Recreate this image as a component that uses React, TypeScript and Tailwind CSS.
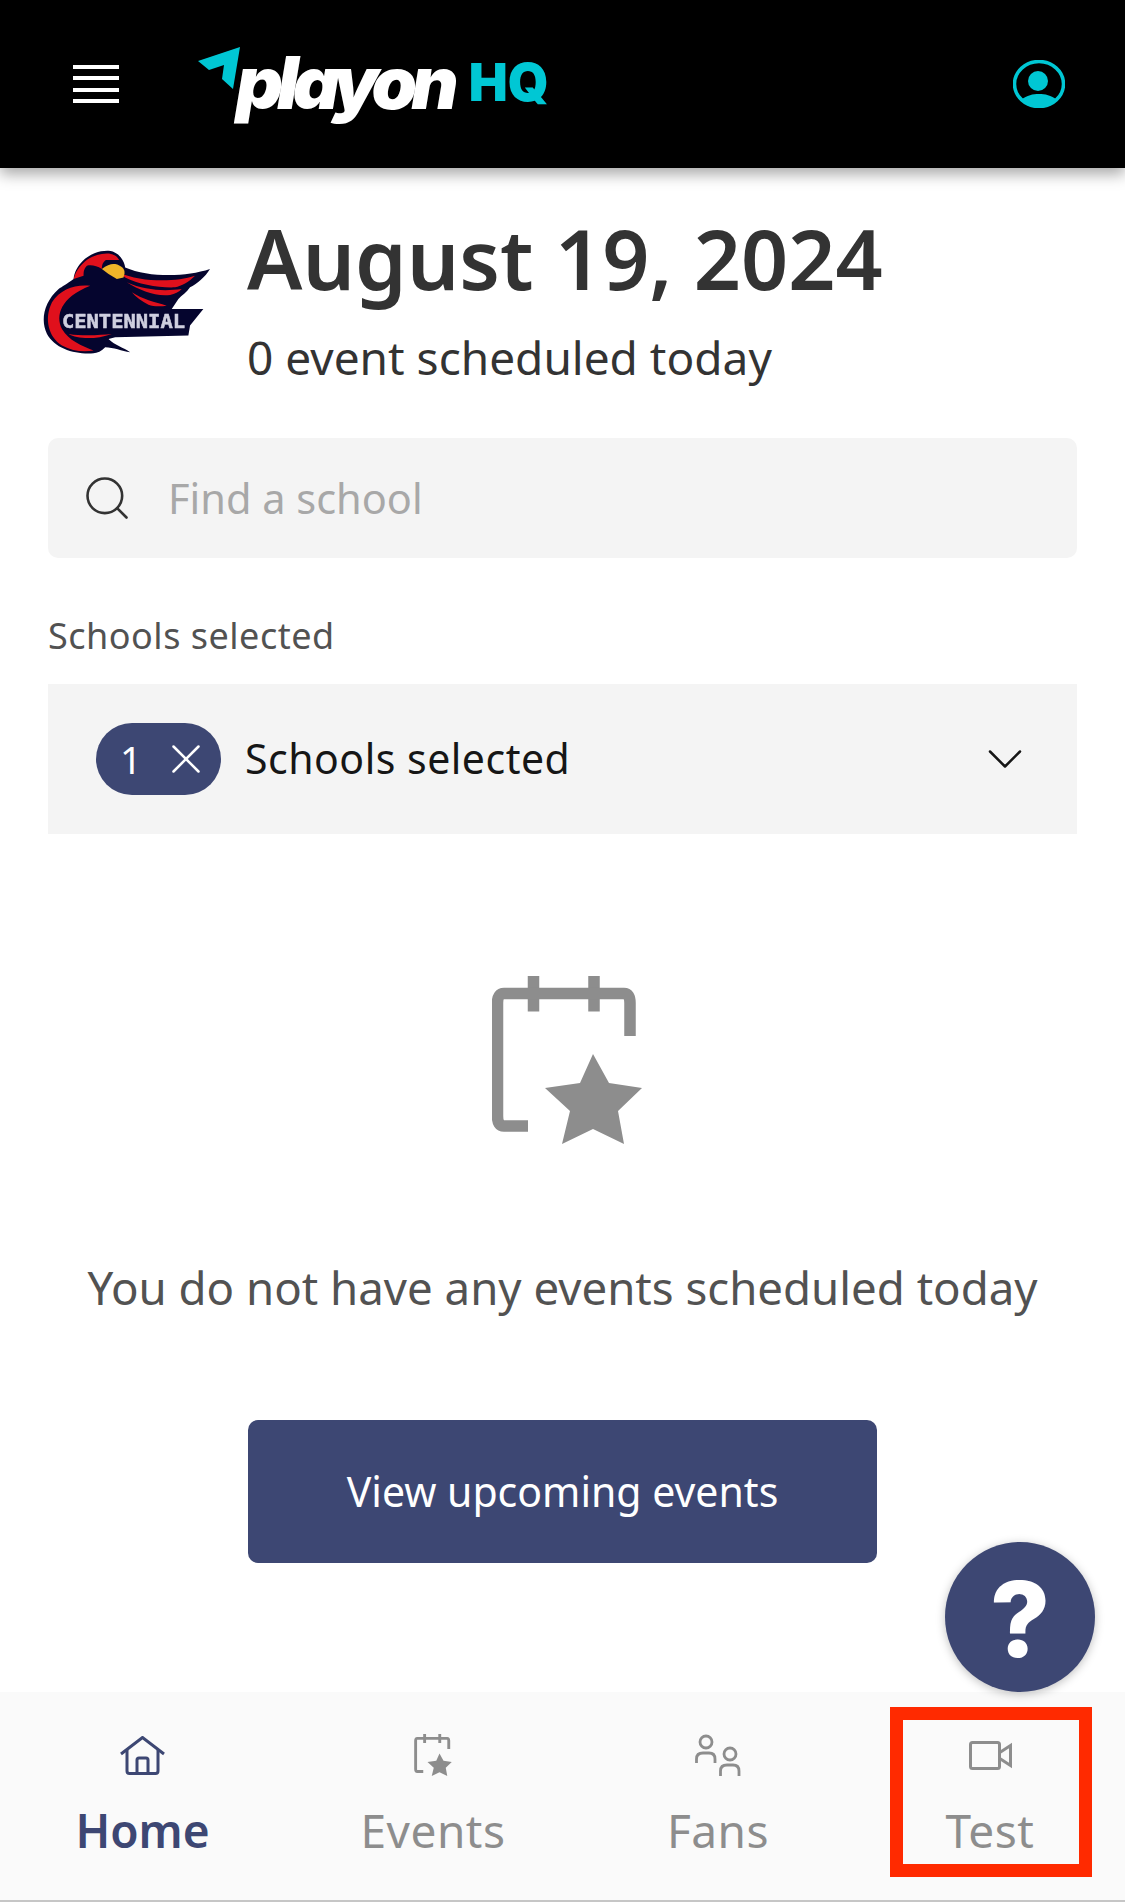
import { ChevronDown, Search, X } from "lucide-react";

function CalendarStar({ className }: { className?: string }) {
  return (
    <svg viewBox="0 0 150 168" className={className} fill="none">
      <path d="M41.5 0V35.5M102 0V35.5" stroke="currentColor" strokeWidth="11.5" />
      <path d="M36 150H12Q5.5 150 5.5 140V27Q5.5 17.5 12 17.5H132Q138 17.5 138 27V60" stroke="currentColor" strokeWidth="11.5" />
      <polygon fill="currentColor" points="101,78 117,107 150,112 126,135 132,168 101,153 70,168 78,135 53,112 88,107" />
    </svg>
  );
}

function Logo() {
  return (
    <div className="ml-[79px] flex items-center">
      <svg viewBox="0 0 42 42" className="mb-[32px] h-[42px] w-[42px] shrink-0">
        <polygon points="0,14 42,0 35,42 24,32 26,18 11,23" fill="#00c7d4" />
      </svg>
      <span className="mb-[4px] ml-[-4px] font-['Inter',sans-serif] text-[73px] leading-none font-black tracking-[-6px] text-white italic">
        playon
      </span>
      <span className="mb-[2px] ml-[16px] font-['Inter',sans-serif] text-[52px] leading-none font-black text-[#00c7d4]">
        HQ
      </span>
    </div>
  );
}

function CentennialLogo() {
  return (
    <svg viewBox="70 55 505 315" className="h-[105px] w-[168px] shrink-0 blur-[0.7px]">
      <path
        d="M165 145C170 100 215 58 270 60C300 62 318 90 320 110C390 140 500 140 575 115C560 140 535 160 515 170C505 185 490 195 480 205L460 235H555L515 285L510 315L290 320L270 325C290 345 315 350 335 365C310 362 285 350 260 350C250 362 235 368 225 368C170 372 110 355 85 310C65 270 75 215 120 175C130 168 145 160 165 145Z"
        fill="#05052e"
      />
      <path
        d="M165 145C175 105 215 68 265 68C285 68 298 78 302 88L262 88C252 95 250 105 250 115C235 105 218 102 205 105C195 115 195 125 195 135Z"
        fill="#e0101c"
      />
      <path
        d="M300 125C370 155 470 155 530 135C510 155 490 165 470 170C420 172 360 160 320 140ZM325 155C380 180 440 182 490 175C480 185 470 190 455 193C410 198 365 180 325 155ZM340 185C370 205 410 215 445 225C425 228 405 228 390 222C370 212 352 200 340 185Z"
        fill="#e0101c"
      />
      <path
        d="M215 165C170 160 125 175 100 215C75 265 90 320 130 345C160 362 195 365 225 360C190 345 150 330 130 295C110 255 125 200 215 165Z"
        fill="#e0101c"
      />
      <path d="M150 310C175 325 230 328 280 310C250 312 200 318 150 310Z" fill="#e0101c" />
      <path d="M250 115C265 102 280 98 290 100C308 104 320 115 318 128L315 140L295 145L270 130Z" fill="#f0b429" />
      <text
        x="130"
        y="292"
        textLength="370"
        lengthAdjust="spacingAndGlyphs"
        fontFamily="'DejaVu Sans Mono', monospace"
        fontWeight="700"
        fontSize="56"
        fill="#cfcfdf"
        stroke="#cfcfdf"
        strokeWidth="1.5"
      >
        CENTENNIAL
      </text>
    </svg>
  );
}

function HomeIcon() {
  return (
    <svg viewBox="0 0 45 39" className="h-[39px] w-[45px]" fill="none" stroke="currentColor" strokeWidth="3">
      <path d="M1 18L22.5 1.5L44 18" />
      <path d="M7 14V35Q7 37.5 9.5 37.5H35.5Q38 37.5 38 35V14" />
      <path d="M17 37V24Q17 22 19 22H26Q28 22 28 24V37" />
    </svg>
  );
}

function FansIcon() {
  return (
    <svg viewBox="0 0 46 42" className="h-[42px] w-[46px]" fill="none" stroke="currentColor" strokeWidth="2.8">
      <circle cx="11" cy="8" r="6" />
      <path d="M1.5 29V25Q1.5 19 8 19H14Q20 19 20 25V29" />
      <circle cx="35" cy="20" r="6" />
      <path d="M25.5 42V37Q25.5 31 32 31H38Q44 31 44 37V42" />
    </svg>
  );
}

function VideoIcon() {
  return (
    <svg viewBox="0 0 43 29" className="h-[29px] w-[43px]" fill="none" stroke="currentColor" strokeWidth="3">
      <rect x="1.5" y="1.5" width="29" height="26" rx="2" />
      <path d="M30 12L41.5 4.5V24.5L30 17" />
    </svg>
  );
}

const navItems = [
  { label: "Home", icon: <HomeIcon />, active: true },
  { label: "Events", icon: <CalendarStar className="h-[42px] w-[38px]" /> },
  { label: "Fans", icon: <FansIcon /> },
  { label: "Test", icon: <VideoIcon /> },
];

export default function App() {
  return (
    <div className="relative flex h-[1902px] w-[1125px] flex-col overflow-hidden bg-white font-['Noto_Sans',sans-serif]">
      <header className="flex h-[168px] shrink-0 items-center bg-black shadow-[0_6px_14px_rgba(0,0,0,0.35)]">
        <div className="ml-[73px] flex h-[39px] w-[46px] shrink-0 flex-col justify-between">
          <div className="h-[4px] bg-white" />
          <div className="h-[4px] bg-white" />
          <div className="h-[4px] bg-white" />
          <div className="h-[4px] bg-white" />
        </div>
        <Logo />
        <svg viewBox="0 0 52 48" className="ml-auto mr-[60px] h-[48px] w-[52px]">
          <ellipse cx="26" cy="24" rx="24.5" ry="22.5" fill="none" stroke="#00c7d4" strokeWidth="3.5" />
          <circle cx="25" cy="21" r="10" fill="#00c7d4" />
          <path d="M8 40C14 35 20 34 26 34C32 34 38 35 44 40C38 46 32 48 26 48C20 48 14 46 8 40Z" fill="#00c7d4" />
        </svg>
      </header>

      <main className="flex flex-1 flex-col px-[48px]">
        <div className="mt-[42px] flex h-[218px] items-start">
          <div className="mt-[39px] -ml-[6px]">
            <CentennialLogo />
          </div>
          <div className="ml-[37px]">
            <h1 className="text-[82.5px] leading-[96px] font-semibold text-[#333333]">August 19, 2024</h1>
            <p className="mt-[20px] text-[46px] leading-[62px] text-[#333333]">0 event scheduled today</p>
          </div>
        </div>

        <div className="mt-[10px] flex h-[120px] items-center rounded-[10px] bg-[#f4f4f4] pl-[33px]">
          <Search className="h-[52px] w-[52px] text-[#333333]" strokeWidth={1.2} />
          <span className="ml-[35px] text-[41.5px] text-[#a8a8a8]">Find a school</span>
        </div>

        <p className="mt-[58px] text-[36px] leading-[40px] tracking-[0.5px] text-[#525252]">Schools selected</p>

        <div className="mt-[28px] flex h-[150px] items-center bg-[#f4f4f4] pl-[48px] pr-[42px]">
          <div className="flex h-[72px] w-[125px] shrink-0 items-center rounded-full bg-[#3d4773] pl-[24px] text-white">
            <span className="text-[38px] leading-none">1</span>
            <X className="ml-[19px] h-[50px] w-[50px] shrink-0" strokeWidth={1.2} />
          </div>
          <span className="ml-[24px] text-[41px] tracking-[0.5px] text-[#161616]">Schools selected</span>
          <ChevronDown className="ml-auto h-[60px] w-[60px] text-[#161616]" strokeWidth={1} />
        </div>

        <div className="mt-[142px] flex flex-col items-center">
          <CalendarStar className="ml-[9px] h-[168px] w-[150px] text-[#8d8d8d]" />
          <p className="mt-[112px] text-[45.6px] leading-[62px] text-[#525252]">
            You do not have any events scheduled today
          </p>
          <button
            type="button"
            className="mt-[102px] flex h-[143px] w-[629px] items-center justify-center rounded-[10px] bg-[#3d4773] text-[41px] text-white"
          >
            View upcoming events
          </button>
        </div>
      </main>

      <button
        type="button"
        className="absolute top-[1542px] left-[945px] flex h-[150px] w-[150px] items-center justify-center rounded-full bg-[#3d4773] pt-[3px] font-['Inter',sans-serif] text-[104px] font-extrabold text-white shadow-[0_2px_10px_rgba(0,0,0,0.25)]"
      >
        ?
      </button>

      <nav className="grid h-[210px] shrink-0 grid-cols-[285px_296px_274px_270px] border-b-2 border-[#c6c6c6] bg-[#fafafa]">
        {navItems.map((item) => (
          <div key={item.label} className="flex flex-col items-center">
            <div
              className={
                item.active
                  ? "mt-[42px] flex h-[42px] items-center text-[#3d4773]"
                  : "mt-[42px] flex h-[42px] items-center text-[#8d8d8d]"
              }
            >
              {item.icon}
            </div>
            <span
              className={
                item.active
                  ? "mt-[23px] text-[46px] leading-[62px] font-semibold text-[#3d4773]"
                  : "mt-[23px] text-[46px] leading-[62px] tracking-[0.5px] text-[#8d8d8d]"
              }
            >
              {item.label}
            </span>
          </div>
        ))}
      </nav>

      <div className="absolute top-[1707px] left-[890px] h-[170px] w-[202px] border-[13px] border-[#ff2a00]" />
    </div>
  );
}
